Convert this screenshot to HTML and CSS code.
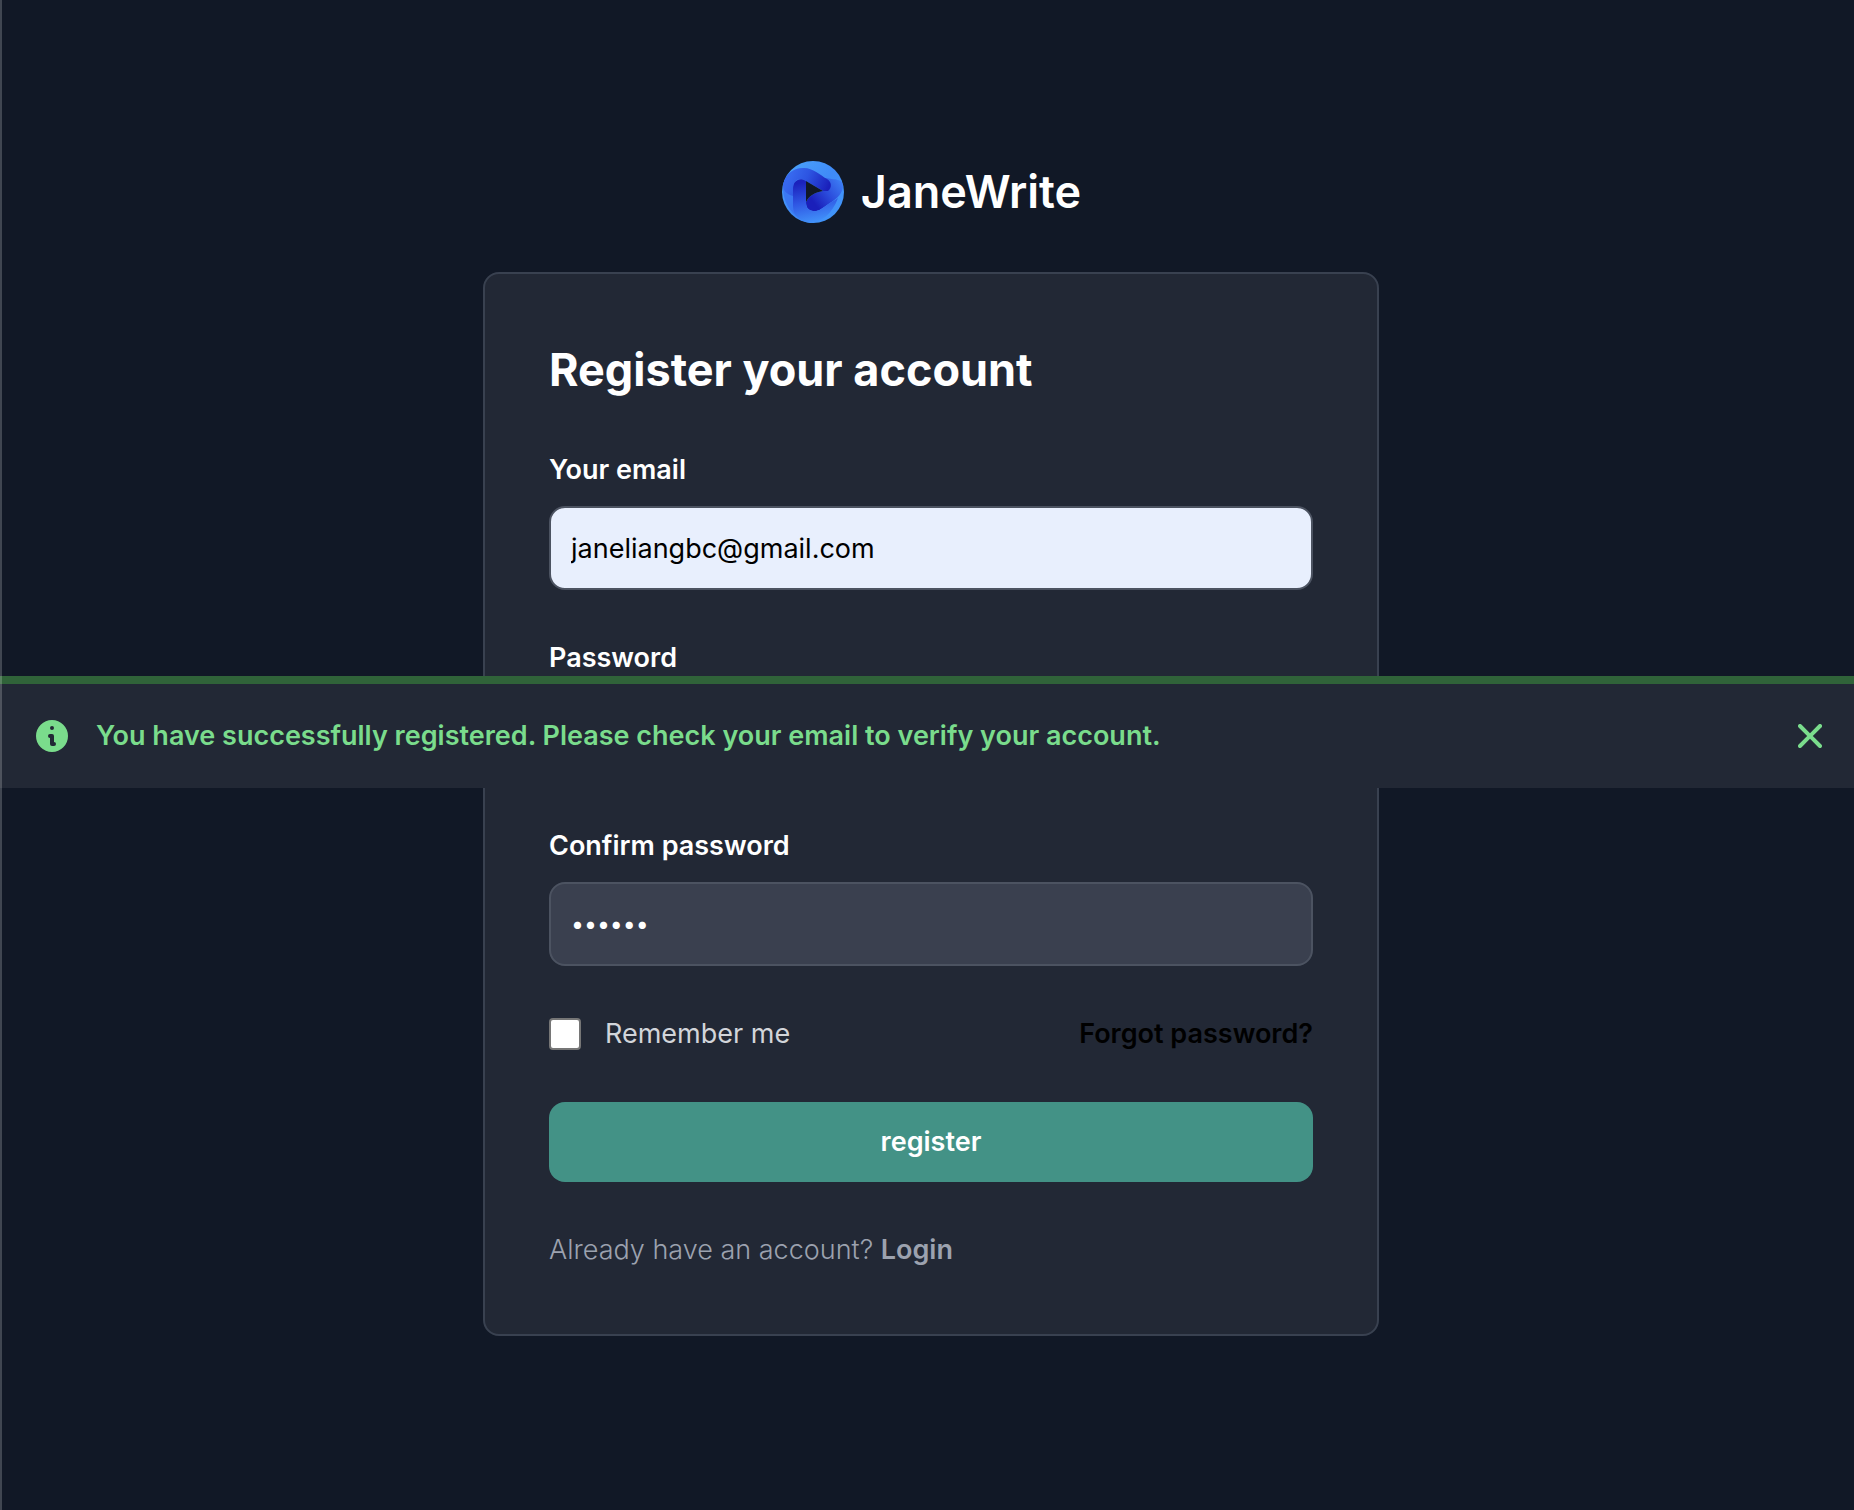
FILE: index.html
```html
<!DOCTYPE html>
<html lang="en">
<head>
<meta charset="utf-8">
<meta name="viewport" content="width=device-width, initial-scale=1">
<title>JaneWrite</title>
<link rel="stylesheet" href="styles.css">
</head>
<body>
<main class="page">
  <a class="brand" href="#">
    <svg class="brand-logo" viewBox="0 0 64 64" aria-hidden="true">
      <defs>
        <linearGradient id="ring" x1="0" y1="0" x2="1" y2="1">
          <stop offset="0" stop-color="#4da6fb"/><stop offset=".5" stop-color="#3f8af7"/><stop offset="1" stop-color="#4299fb"/>
        </linearGradient>
        <linearGradient id="top" gradientUnits="userSpaceOnUse" x1="10" y1="14" x2="46" y2="30">
          <stop offset="0" stop-color="#3768ee"/><stop offset=".4" stop-color="#2d55e2"/><stop offset="1" stop-color="#1a20bb"/>
        </linearGradient>
        <linearGradient id="left" gradientUnits="userSpaceOnUse" x1="24" y1="22" x2="32" y2="62">
          <stop offset="0" stop-color="#1b22bd"/><stop offset=".5" stop-color="#2f57e4"/><stop offset="1" stop-color="#4190f9"/>
        </linearGradient>
        <linearGradient id="right" gradientUnits="userSpaceOnUse" x1="34" y1="44" x2="60" y2="24">
          <stop offset="0" stop-color="#1a1fba"/><stop offset=".5" stop-color="#2b4cdc"/><stop offset="1" stop-color="#3b78f2"/>
        </linearGradient>
      </defs>
      <circle cx="32" cy="32" r="31" fill="url(#ring)"/>
      <path fill="#386cef" d="M2 25C5 13 13 8 23 8L14 22V46C14 55 19 60 27 62C12 58 1 43 2 25Z" opacity=".7"/>
      <path fill="url(#right)" d="M44 18C54 20 62 18 62 27C61 35 54 40 46 45C42 48 37 52 32 51C26 50 25 46 25 42C29 35 33 33 42 31Z"/>
      <path fill="url(#top)" d="M2 25C5 12 14 8 23 8C32 8 39 15 46 19C51 22 51 28 47 31L42 31L25 21C19 17 12 20 12 28V36C5 34 2 30 2 25Z"/>
      <path fill="url(#left)" d="M25 21C19 17 12 20 12 29V46C12 56 19 61 29 63C41 62 51 54 57 38C53 41 50 42 46 45C42 48 37 52 32 51C26 50 25 46 25 42Z"/>
      <path fill="#111826" d="M25 21L42 31C33 33 29 35 25 42Z"/>
    </svg>
    JaneWrite
  </a>
  <section class="card">
    <h1 class="title">Register your account</h1>
    <form class="form">
      <div class="field">
        <label for="email">Your email</label>
        <input class="input input-filled" type="email" id="email" value="janeliangbc@gmail.com">
      </div>
      <div class="field">
        <label for="password">Password</label>
        <input class="input input-password" type="password" id="password" value="secret">
      </div>
      <div class="field">
        <label for="confirm">Confirm password</label>
        <input class="input input-password" type="password" id="confirm" value="secret">
      </div>
      <div class="options">
        <div class="remember">
          <input class="checkbox" type="checkbox" id="remember">
          <label for="remember">Remember me</label>
        </div>
        <a class="forgot" href="#">Forgot password?</a>
      </div>
      <button class="submit" type="submit">register</button>
      <p class="login">Already have an account? <a href="#">Login</a></p>
    </form>
  </section>
</main>
<div class="toast" role="alert">
  <svg class="toast-icon" viewBox="0 0 20 20" fill="currentColor" aria-hidden="true"><path fill-rule="evenodd" clip-rule="evenodd" d="M18 10a8 8 0 11-16 0 8 8 0 0116 0zm-7-4a1 1 0 11-2 0 1 1 0 012 0zM9 9a1 1 0 000 2v3a1 1 0 001 1h1a1 1 0 100-2v-3a1 1 0 00-1-1H9z"/></svg>
  <p class="toast-text">You have successfully registered. Please check your email to verify your account.</p>
  <button class="toast-close" type="button" aria-label="Close">
    <svg viewBox="4 4 12 12" fill="currentColor" aria-hidden="true"><path fill-rule="evenodd" clip-rule="evenodd" d="M4.293 4.293a1 1 0 011.414 0L10 8.586l4.293-4.293a1 1 0 111.414 1.414L11.414 10l4.293 4.293a1 1 0 01-1.414 1.414L10 11.414l-4.293 4.293a1 1 0 01-1.414-1.414L8.586 10 4.293 5.707a1 1 0 010-1.414z"/></svg>
  </button>
</div>
</body>
</html>
```
FILE: styles.css
```css
*,
*::before,
*::after {
  box-sizing: border-box;
}

body {
  margin: 0;
  background: #111826;
  color: #fff;
  font-family: Inter, "Liberation Sans", sans-serif;
  font-size: 27px;
  line-height: 40px;
}

/* hairline along the left edge, above everything */
body::before {
  content: "";
  position: fixed;
  inset: 0 auto 0 0;
  z-index: 20;
  width: 2px;
  background: rgb(255 255 255 / 20%);
}

h1,
p {
  margin: 0;
}

a {
  color: inherit;
  text-decoration: none;
}

input,
button {
  margin: 0;
  font: inherit;
}

.page {
  display: flex;
  flex-direction: column;
  align-items: center;
  justify-content: center;
  gap: 48px;
  min-height: 100vh;
  padding: 0 24px 14px 32px;
}

.brand {
  display: flex;
  align-items: center;
  gap: 16px;
  font-size: 45px;
  font-weight: 600;
  line-height: 64px;
}

.brand-logo {
  width: 64px;
  height: 64px;
}

.card {
  width: 100%;
  max-width: 896px;
  padding: 64px;
  border: 2px solid #394150;
  border-radius: 16px;
  background: #222835;
}

.title {
  margin-bottom: 48px;
  font-size: 45px;
  font-weight: 700;
  line-height: 64px;
}

.form {
  display: flex;
  flex-direction: column;
  gap: 48px;
}

.field {
  display: flex;
  flex-direction: column;
  gap: 16px;
  font-weight: 600;
}

.input {
  width: 100%;
  height: 84px;
  padding: 20px;
  border: 2px solid #4c5361;
  border-radius: 16px;
  outline: none;
  background: #3a404f;
  color: #fff;
  font-weight: 400;
}

.input-filled {
  background: #e8effd;
  color: #000;
}

.input-password {
  font-size: 23px;
}

.options {
  display: flex;
  align-items: center;
  justify-content: space-between;
}

.remember {
  display: flex;
  align-items: center;
  gap: 24px;
  color: #d2d5da;
}

.checkbox {
  appearance: none;
  width: 32px;
  height: 32px;
  border: 2px solid #767676;
  border-radius: 4px;
  background: #fff;
}

.checkbox:checked {
  background: #43938a;
}

.forgot {
  color: #000;
  font-weight: 600;
}

.submit {
  height: 80px;
  border: 0;
  border-radius: 16px;
  background: #439286;
  color: #fff;
  font-weight: 600;
}

.login {
  color: #9ca2af;
  font-weight: 300;
}

.login a {
  font-weight: 600;
}

.toast {
  position: fixed;
  top: 676px;
  right: 0;
  left: 0;
  z-index: 10;
  display: flex;
  align-items: center;
  gap: 24px;
  padding: 32px;
  border-top: 8px solid #306339;
  background: #222835;
  color: #7adc8c;
  font-weight: 600;
}

.toast-icon {
  flex: none;
  width: 40px;
  height: 40px;
}

.toast-text {
  flex: 1;
}

.toast-close {
  display: flex;
  padding: 0;
  border: 0;
  background: none;
  color: inherit;
}

.toast-close svg {
  width: 24px;
  height: 24px;
}
```
